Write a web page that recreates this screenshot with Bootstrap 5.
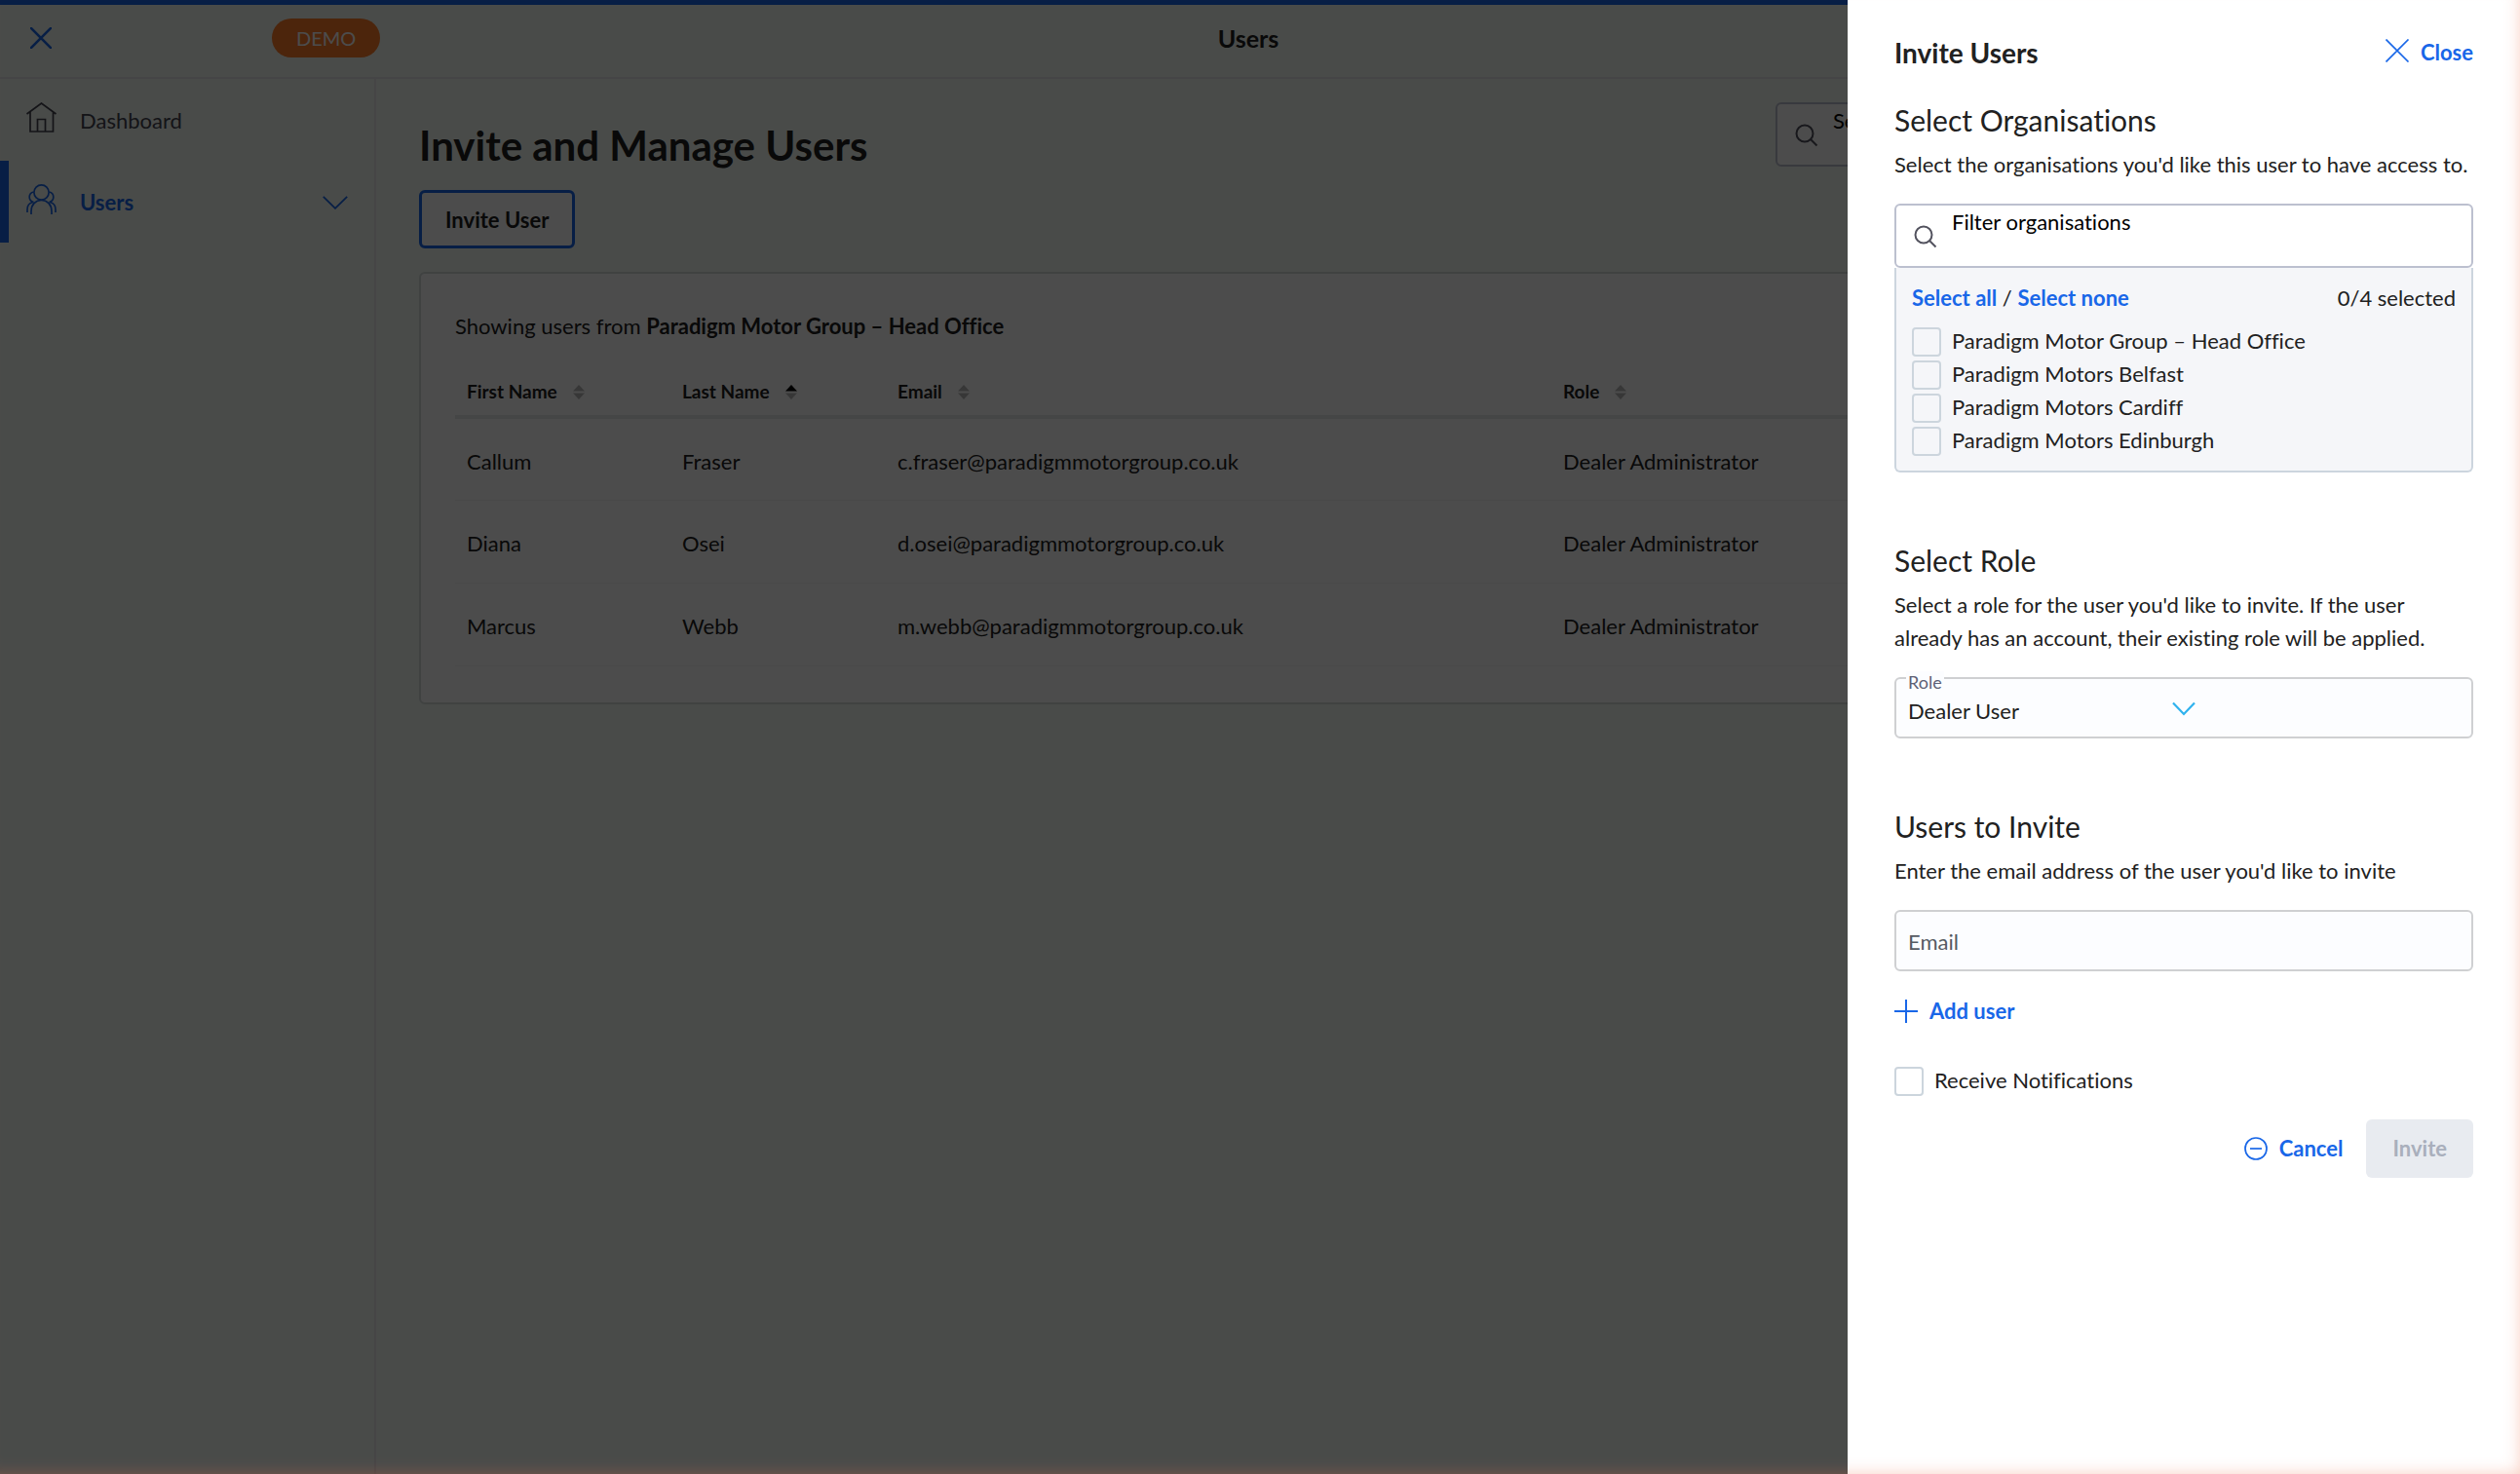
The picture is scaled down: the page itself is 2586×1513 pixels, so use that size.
<!DOCTYPE html>
<html lang="en">
<head>
<meta charset="utf-8">
<meta name="viewport" content="width=device-width, initial-scale=1">
<title>Invite and Manage Users</title>
<link rel="stylesheet" href="https://cdn.jsdelivr.net/npm/bootstrap@5.3.0/dist/css/bootstrap.min.css">
<style>
:root{--brand:#1967e8;--ink:#212121;--page:#f4faf6;--line:#d5dddb;--side:386px}
body{font-family:Lato,"Open Sans",sans-serif;font-size:22px;line-height:34px;color:var(--ink);background:var(--page);font-variant-ligatures:none;overflow:hidden}
svg{fill:none;stroke:currentColor;flex:none;display:block}
a,.btn-plain{color:var(--brand);font-weight:700;text-decoration:none}
.btn-plain{background:none;border:0;padding:0}

/* Page behind the drawer */
.topbar{height:81px;border-top:5px solid var(--brand);border-bottom:2px solid #e6e6ea;padding:0 55px 6px 31px}
.topbar .edge{flex:1 1 0}
.menu-close{margin-right:226px}
.demo-pill{background:#fd7c28;color:#fff;font-size:20px;line-height:40px;padding:0 25px}
.page-name{font-size:25px;font-weight:700}
.sidebar{width:var(--side);border-right:2px solid #e9e6ea}
.side-link{height:84px;padding-left:27px;padding-top:2px;gap:24px;color:#43434f;font-weight:400}
.side-link .nav-icon{margin-bottom:8px}
.side-link.current{color:var(--brand);font-weight:700;border-left:9px solid var(--brand);padding-left:18px;padding-right:27px}
.content{padding:24px 24px 24px 44px}
h1{font-size:42px;line-height:52px;font-weight:700;margin:18px 0 20px}
.btn-outline{border:3px solid var(--brand);border-radius:6px;background:#fff;color:var(--ink);font-weight:700;padding:11px 24px 9px}
.users-card{background:#fff;border:2px solid var(--line);border-radius:6px;padding:37px 35px;margin-top:24px}
.users-table{table-layout:fixed}
.users-table th{font-size:19px;height:76px;padding:28px 12px 2px;vertical-align:middle}
.users-table td{height:85px;padding:5px 12px 0;vertical-align:middle;border-bottom:1px solid #f5f5f5}
.users-table thead tr{border-bottom:4px solid #e6ecea}
.users-table .name-col{width:221px}
.users-table .mail-col{width:683px}
.sort-icon{stroke:none;color:#b9b9b9}

/* Fields */
.search-field{height:66px;background:#fff;border:2px solid #bcc0cf;border-radius:6px;padding-left:18px;gap:15px}
.search-field svg{color:#52525e}
.search-field label{color:#000;line-height:34px;display:block}
.search-field input{border:0;outline:0;background:transparent;height:28px;width:100%;padding:0;display:block}
.page-search{width:740px}
.field-box{height:63px;width:100%;display:block;background:#fcfdff;border:2px solid #cfd0d2;border-radius:6px;padding:2px 12px 0;color:var(--ink);appearance:none;outline:0}
.field-box::placeholder{color:#565b63;opacity:1}
select.field-box{padding-top:7px}
.float-label{position:absolute;left:12px;top:-6px;padding:0 2px;font-size:18px;line-height:22px;color:#5d6075;background:#fcfdff}
.select-arrow{position:absolute;left:48%;top:25px;pointer-events:none;color:#2fb2ee}
.tick-row{gap:11px;height:34px}
.tick{appearance:none;width:30px;height:30px;border:2px solid #ccd5dd;border-radius:4px;margin:2px 0 0;background:transparent;flex:none}

/* Drawer */
.offcanvas-backdrop.show{opacity:.7}
.offcanvas.drawer{--bs-offcanvas-width:690px;--bs-offcanvas-border-width:0;--bs-offcanvas-color:var(--ink);background:#fff;padding:34px 48px;transition:none;outline:0}
.drawer-head{margin-bottom:29px}
.drawer h2{font-size:28px;line-height:40px;font-weight:700;margin:0}
.drawer h3{font-size:30px;line-height:40px;font-weight:400;margin:0 0 9px}
.drawer p{margin:0 0 23px}
.drawer section{margin-bottom:70px}
.org-list{background:#f5f6f9;border:2px solid #ccd5de;border-top:0;border-radius:0 0 6px 6px;padding:14px 16px}
.org-tools{margin-bottom:10px}
.notify-row{margin:37px 0 23px}
.btn-muted,.btn-muted:disabled{background:#e8ebf0;color:#a9afbc;border:0;border-radius:6px;font-weight:700;height:60px;padding:0 27px}
.edge-glow{position:fixed;inset:0;z-index:2000;pointer-events:none;box-shadow:inset -8px -8px 16px -8px rgba(235,110,70,.32)}
</style>
</head>
<body>
<div class="d-flex flex-column min-vh-100">
  <header class="topbar d-flex align-items-center">
    <div class="edge d-flex align-items-center">
      <button class="btn-plain menu-close" type="button" aria-label="Close menu"><svg width="22" height="22" viewBox="0 0 22 22" stroke-width="2.6"><path d="M0 0L22 22M22 0L0 22"/></svg></button>
      <span class="demo-pill rounded-pill">DEMO</span>
    </div>
    <div class="page-name">Users</div>
    <div class="edge"></div>
  </header>
  <div class="d-flex flex-grow-1">
    <nav class="sidebar flex-shrink-0">
      <a href="#" class="side-link d-flex align-items-center">
        <svg class="nav-icon" width="31" height="31" viewBox="0 0 31 31" stroke-width="1.7"><path d="M.5 12L15.500 1L30.500 12M4 9.500V30H27.500V9.500M11.500 30V17.500H19.500V30"/></svg>
        Dashboard</a>
      <a href="#" class="side-link current d-flex align-items-center">
        <svg class="nav-icon" width="31" height="31" viewBox="0 0 31 31" stroke-width="1.7"><circle cx="15.500" cy="8.500" r="7.600"/><path d="M5 31V28C5 21 9.500 16.500 15.500 16.500S26 21 26 28V31M7.500 8C2 9 1.500 17 7.500 18.500M23.500 8C29 9 29.500 17 23.500 18.500M1 29V26C1 22 3 19.500 6.500 18.500M30 29V26C30 22 28 19.500 24.500 18.500"/></svg>
        <span class="flex-grow-1">Users</span>
        <svg width="26" height="14" viewBox="0 0 26 14" stroke-width="1.8"><path d="M.8.800L13 12.800L25.200.800"/></svg></a>
    </nav>
    <main class="content flex-grow-1">
      <div class="d-flex justify-content-between align-items-start">
        <div>
          <h1>Invite and Manage Users</h1>
          <button class="btn-outline" type="button">Invite User</button>
        </div>
        <div class="search-field page-search d-flex">
          <svg class="mt-3 pt-1" width="24" height="28" viewBox="0 0 24 24" stroke-width="2"><circle cx="10" cy="10" r="8.500"/><path d="M16 16L22.500 22.500"/></svg>
          <div class="flex-grow-1"><label for="userSearch">Search</label><input id="userSearch" type="text"></div>
        </div>
      </div>
      <div class="users-card">
        <div>Showing users from <strong>Paradigm Motor Group – Head Office</strong></div>
        <table class="users-table w-100">
          <thead>
            <tr>
              <th class="name-col"><div class="d-flex align-items-center">First Name<svg class="sort-icon ms-3" width="12" height="15" viewBox="0 0 12 15"><path fill="currentColor" d="M0 6.500L6 0L12 6.500ZM0 8.500H12L6 15Z"/></svg></div></th>
              <th class="name-col"><div class="d-flex align-items-center">Last Name<svg class="sort-icon ms-3" width="12" height="15" viewBox="0 0 12 15"><path fill="#000" d="M0 6.500L6 0L12 6.500Z"/><path fill="currentColor" d="M0 8.500H12L6 15Z"/></svg></div></th>
              <th class="mail-col"><div class="d-flex align-items-center">Email<svg class="sort-icon ms-3" width="12" height="15" viewBox="0 0 12 15"><path fill="currentColor" d="M0 6.500L6 0L12 6.500ZM0 8.500H12L6 15Z"/></svg></div></th>
              <th><div class="d-flex align-items-center">Role<svg class="sort-icon ms-3" width="12" height="15" viewBox="0 0 12 15"><path fill="currentColor" d="M0 6.500L6 0L12 6.500ZM0 8.500H12L6 15Z"/></svg></div></th>
            </tr>
          </thead>
          <tbody>
            <tr><td>Callum</td><td>Fraser</td><td>c.fraser@paradigmmotorgroup.co.uk</td><td>Dealer Administrator</td></tr>
            <tr><td>Diana</td><td>Osei</td><td>d.osei@paradigmmotorgroup.co.uk</td><td>Dealer Administrator</td></tr>
            <tr><td>Marcus</td><td>Webb</td><td>m.webb@paradigmmotorgroup.co.uk</td><td>Dealer Administrator</td></tr>
          </tbody>
        </table>
      </div>
    </main>
  </div>
</div>

<div class="offcanvas-backdrop show"></div>
<aside class="offcanvas offcanvas-end show drawer" data-bs-backdrop="false" data-bs-scroll="true" aria-labelledby="drawerTitle">
  <div class="drawer-head d-flex justify-content-between align-items-center">
    <h2 id="drawerTitle">Invite Users</h2>
    <button class="btn-plain d-flex align-items-center" type="button"><svg class="me-2 mb-1" width="28" height="24" viewBox="0 0 28 24" stroke-width="1.700"><path d="M.5.500L23.500 23.500M23.500.500L.5 23.500"/></svg>Close</button>
  </div>
  <section>
    <h3>Select Organisations</h3>
    <p>Select the organisations you'd like this user to have access to.</p>
    <div class="search-field d-flex">
      <svg class="mt-3 pt-1" width="24" height="28" viewBox="0 0 24 24" stroke-width="2"><circle cx="10" cy="10" r="8.500"/><path d="M16 16L22.500 22.500"/></svg>
      <div class="flex-grow-1"><label for="orgFilter">Filter organisations</label><input id="orgFilter" type="text"></div>
    </div>
    <div class="org-list">
      <div class="org-tools d-flex justify-content-between">
        <div><a href="#">Select all</a> / <a href="#">Select none</a></div>
        <div>0/4 selected</div>
      </div>
      <div class="tick-row d-flex align-items-center"><input class="tick" type="checkbox" id="org1"><label for="org1">Paradigm Motor Group – Head Office</label></div>
      <div class="tick-row d-flex align-items-center"><input class="tick" type="checkbox" id="org2"><label for="org2">Paradigm Motors Belfast</label></div>
      <div class="tick-row d-flex align-items-center"><input class="tick" type="checkbox" id="org3"><label for="org3">Paradigm Motors Cardiff</label></div>
      <div class="tick-row d-flex align-items-center"><input class="tick" type="checkbox" id="org4"><label for="org4">Paradigm Motors Edinburgh</label></div>
    </div>
  </section>
  <section>
    <h3>Select Role</h3>
    <p>Select a role for the user you'd like to invite. If the user already has an account, their existing role will be applied.</p>
    <div class="position-relative">
      <select class="field-box" id="role"><option>Dealer User</option></select>
      <label class="float-label" for="role">Role</label>
      <svg class="select-arrow" width="24" height="15" viewBox="0 0 24 15" stroke-width="2.200"><path d="M1 1.500L12 13L23 1.500"/></svg>
    </div>
  </section>
  <div>
    <h3>Users to Invite</h3>
    <p id="mailHelp">Enter the email address of the user you'd like to invite</p>
    <input class="field-box mb-4" type="email" placeholder="Email" aria-labelledby="mailHelp">
    <button class="btn-plain d-flex align-items-center" type="button"><svg class="me-2" width="28" height="24" viewBox="0 0 28 24" stroke-width="2"><path d="M12 0V24M0 12H24"/></svg>Add user</button>
  </div>
  <div class="tick-row notify-row d-flex align-items-center"><input class="tick" type="checkbox" id="notify"><label for="notify">Receive Notifications</label></div>
  <div class="d-flex justify-content-end align-items-center gap-4">
    <button class="btn-plain d-flex align-items-center" type="button"><svg class="me-2" width="28" height="24" viewBox="0 0 28 24" stroke-width="1.700"><circle cx="12" cy="12" r="11"/><path d="M6 12H18"/></svg>Cancel</button>
    <button class="btn-muted" type="button" disabled>Invite</button>
  </div>
</aside>
<div class="edge-glow"></div>
<script src="https://cdn.jsdelivr.net/npm/bootstrap@5.3.0/dist/js/bootstrap.bundle.min.js"></script>
</body>
</html>
